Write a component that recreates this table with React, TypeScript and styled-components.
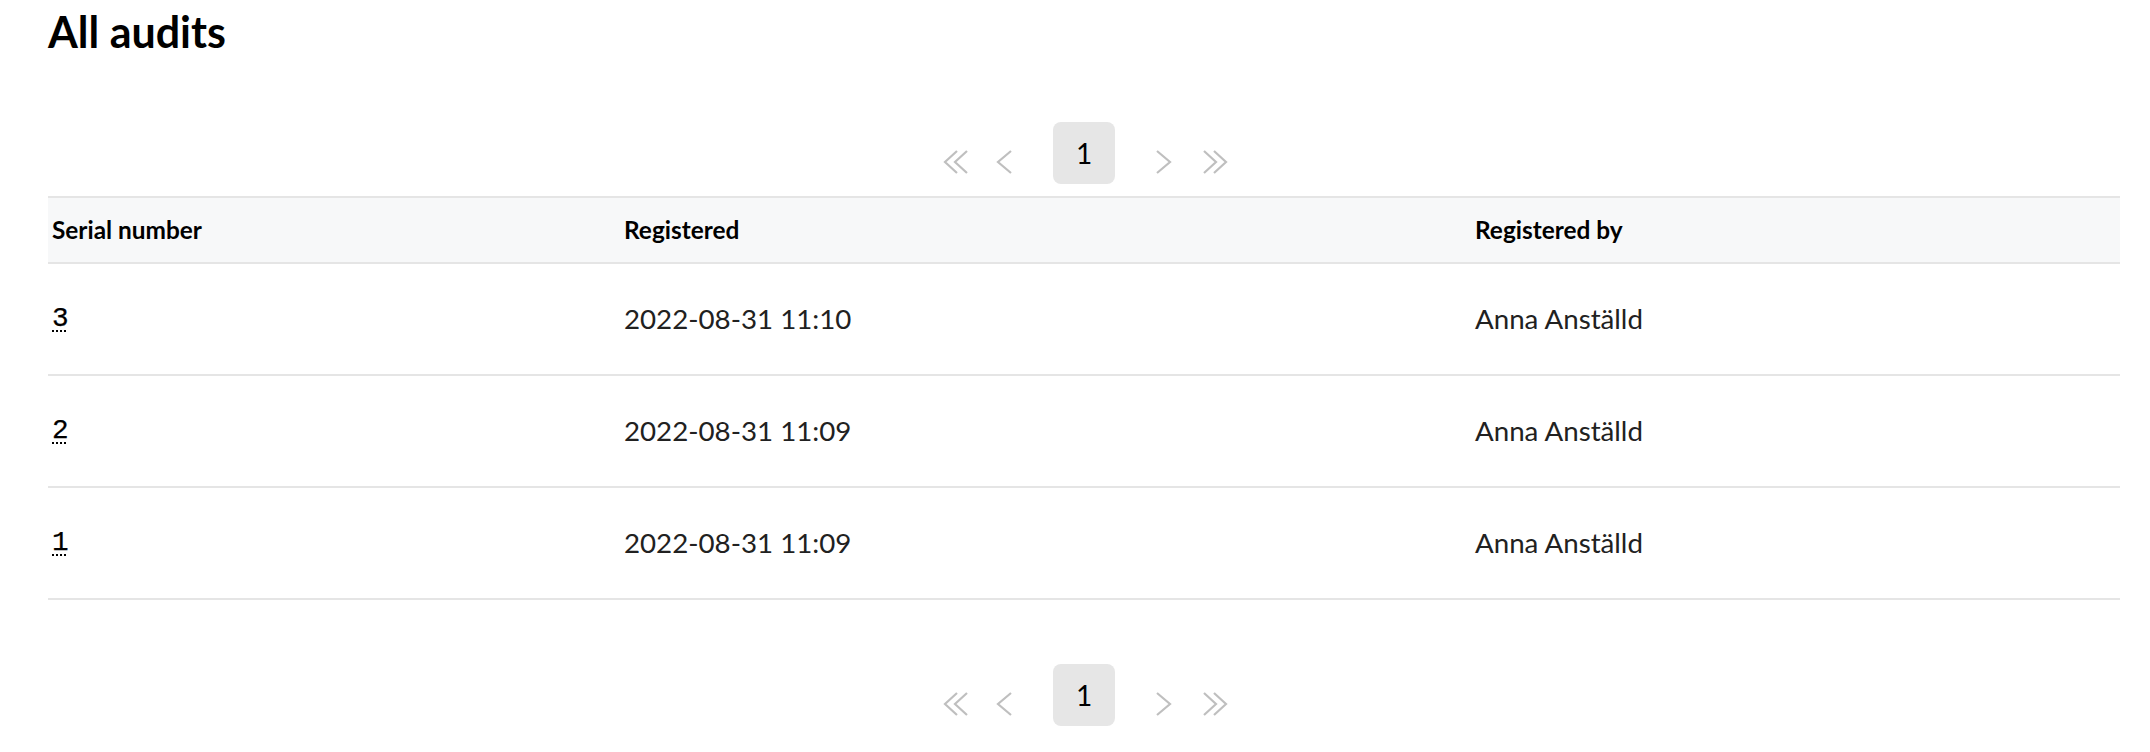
import React from "react";
import styled, { createGlobalStyle } from "styled-components";

const GlobalStyle = createGlobalStyle`
  html, body { margin: 0; padding: 0; background: #ffffff; }
  body { font-family: Lato, "Noto Sans", sans-serif; color: #000; }
`;

const Page = styled.main`
  padding: 0 30px 0 48px;
`;

const Title = styled.h1`
  margin: 6px 0 0;
  font-family: Lato, sans-serif;
  font-weight: 700;
  font-size: 43px;
  line-height: 52px;
  color: #000;
`;

const Pager = styled.nav<{ $top: number }>`
  display: flex;
  justify-content: center;
  align-items: center;
  padding-left: 3px;
  margin-top: ${(p) => p.$top}px;
`;

const IconGroup = styled.div<{ $gap: number }>`
  display: flex;
  align-items: center;
  gap: ${(p) => p.$gap}px;
  margin-top: 18px;
`;

const IconButton = styled.span<{ $w: number }>`
  display: flex;
  width: ${(p) => p.$w}px;
  height: 24px;
  color: #bfbfbf;
`;

const PageNumber = styled.span`
  display: flex;
  align-items: center;
  justify-content: center;
  width: 62px;
  height: 62px;
  margin: 0 34px;
  border-radius: 8px;
  background: #e6e6e6;
  font-size: 28px;
  color: #000;
`;

const Table = styled.div`
  margin-top: 12px;
  display: grid;
  grid-template-columns: 572px 851px 1fr;
`;

const HeadCell = styled.div`
  box-sizing: border-box;
  height: 68px;
  display: flex;
  align-items: center;
  padding: 0 0 2px 4px;
  background: #f7f8f9;
  border-top: 2px solid #e5e5e5;
  border-bottom: 2px solid #e5e5e5;
  font-size: 24.4px;
  font-weight: 700;
  color: #000;
`;

const Cell = styled.div`
  box-sizing: border-box;
  height: 112px;
  display: flex;
  align-items: center;
  padding: 0 0 2px 4px;
  border-bottom: 2px solid #e5e5e5;
  font-size: 27.7px;
  color: #212121;
`;

const Serial = styled.abbr`
  font-family: "Liberation Mono", "DejaVu Sans Mono", monospace;
  font-size: 27.7px;
  color: #000;
  text-decoration: underline dotted;
  text-underline-offset: 5px;
  text-decoration-thickness: 2px;
  -webkit-text-stroke: 0.25px #000;
  cursor: help;
`;

const icons = {
  first: { w: 26, d: "M14 1 L2 12 L14 23 M24 1 L12 12 L24 23" },
  prev: { w: 24, d: "M16 1 L3 12 L16 23" },
  next: { w: 24, d: "M8 1 L21 12 L8 23" },
  last: { w: 26, d: "M2 1 L14 12 L2 23 M12 1 L24 12 L12 23" },
};

const Chevron = ({ kind }: { kind: keyof typeof icons }) => {
  const { w, d } = icons[kind];
  return (
    <IconButton $w={w}>
      <svg width={w} height="24" viewBox={`0 0 ${w} 24`} fill="none" stroke="currentColor" strokeWidth="2.2">
        <path d={d} />
      </svg>
    </IconButton>
  );
};

const Pagination = ({ top }: { top: number }) => (
  <Pager $top={top}>
    <IconGroup $gap={26}>
      <Chevron kind="first" />
      <Chevron kind="prev" />
    </IconGroup>
    <PageNumber>1</PageNumber>
    <IconGroup $gap={29}>
      <Chevron kind="next" />
      <Chevron kind="last" />
    </IconGroup>
  </Pager>
);

const rows = [
  { serial: "3", date: "2022-08-31 11:10", by: "Anna Anställd" },
  { serial: "2", date: "2022-08-31 11:09", by: "Anna Anställd" },
  { serial: "1", date: "2022-08-31 11:09", by: "Anna Anställd" },
];

export default function App() {
  return (
    <Page>
      <GlobalStyle />
      <Title>All audits</Title>
      <Pagination top={64} />
      <Table>
        <HeadCell>Serial number</HeadCell>
        <HeadCell>Registered</HeadCell>
        <HeadCell>Registered by</HeadCell>
        {rows.map((r) => (
          <React.Fragment key={r.serial}>
            <Cell>
              <Serial title="Serial number">{r.serial}</Serial>
            </Cell>
            <Cell>{r.date}</Cell>
            <Cell>{r.by}</Cell>
          </React.Fragment>
        ))}
      </Table>
      <Pagination top={64} />
    </Page>
  );
}
